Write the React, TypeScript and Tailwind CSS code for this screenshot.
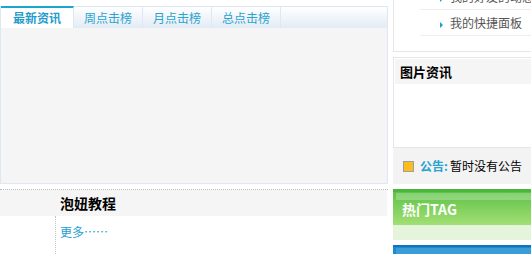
export default function App() {
  const tabs = ['周点击榜', '月点击榜', '总点击榜'];

  return (
    <div className="w-[531px] h-[254px] overflow-hidden flex bg-white font-['Noto_Sans_CJK_SC','Noto_Sans',sans-serif] text-[12px]">
      {/* left column */}
      <div className="w-[388px] shrink-0 pt-[6px]">
        <div className="h-[178px] border border-[#dfe8f2] bg-[#f5f5f5] flex flex-col">
          <div className="h-[21px] flex bg-gradient-to-b from-white to-[#e2ebf5]">
            <div className="w-[73px] h-[22px] -mt-px border-t-2 border-r border-t-[#1aa6cf] border-r-[#dfe8f2] bg-white flex items-center justify-center font-bold text-[#1f9ccb]">
              最新资讯
            </div>
            {tabs.map(t => (
              <div key={t} className="w-[69px] border-r border-[#dfe8f2] flex items-center justify-center text-[#2aa3cf]">
                {t}
              </div>
            ))}
          </div>
          <div className="flex-1 bg-[#f5f5f5]"></div>
        </div>

        <div className="mt-[5px] border-t border-dotted border-[#b8b8b8]"></div>
        <div className="h-[26px] w-[387px] bg-[#f5f5f5] pl-[60px] flex items-center text-[14px] font-bold text-black">
          泡妞教程
        </div>
        <div className="flex">
          <div className="w-[56px] h-[60px] border-r border-dotted border-[#c4c4c4]"></div>
          <div className="pl-[4px] pt-[6px] leading-[20px] text-[#1a9fd0]">更多……</div>
        </div>
      </div>

      {/* right column */}
      <div className="ml-[5px] w-[160px] shrink-0">
        <div className="h-[52px] border-l border-b border-[#e6e6e6] overflow-hidden">
          <ul className="pl-[26px]">
            <li className="-mt-[16px] h-[26px] border-b border-[#eeeeee] pl-[20px] flex items-center gap-[7px] text-[#555]">
              <span className="mt-[4px] w-0 h-0 border-y-[3px] border-y-transparent border-l-[3px] border-l-[#1aa0cf]"></span>
              我的好友的动态
            </li>
            <li className="h-[26px] border-b border-[#eeeeee] pl-[20px] flex items-center gap-[7px] text-[#555]">
              <span className="mt-[4px] w-0 h-0 border-y-[3px] border-y-transparent border-l-[3px] border-l-[#1aa0cf]"></span>
              我的快捷面板
            </li>
          </ul>
        </div>

        <div className="mt-[5px] h-[91px] border border-[#e6e6e6] p-px">
          <div className="h-[25px] bg-[#f5f5f5] pl-[5px] leading-[25px] text-[13px] font-bold text-black">图片资讯</div>
        </div>

        <div className="h-[36px] bg-[#f3f3f3] pl-[10px] flex items-center">
          <span className="w-[11px] h-[11px] border border-[#a0a0a0] bg-[#fbbd1e] mr-[6px]"></span>
          <span className="font-bold text-[#2aa3cf] mr-[2px]">公告:</span>
          <span className="text-black">暂时没有公告</span>
        </div>

        <div className="mt-[5px] h-[36px] border-t-[3px] border-[#4ab63a] bg-gradient-to-b from-[#5cc247] to-[#a2df74] pt-px">
          <div className="ml-[3px] h-[7px] bg-white/25"></div>
          <div className="h-[18px] leading-[18px] pl-[9px] text-[14px] font-bold text-white">热门TAG</div>
        </div>
        <div className="h-[15px] bg-[#e4f5dc]"></div>

        <div className="mt-[5px] h-[30px] border-t-2 border-[#1272bb] bg-[#1a8bd0] pt-px">
          <div className="ml-[3px] h-[6px] bg-white/15"></div>
        </div>
      </div>
    </div>
  );
}
